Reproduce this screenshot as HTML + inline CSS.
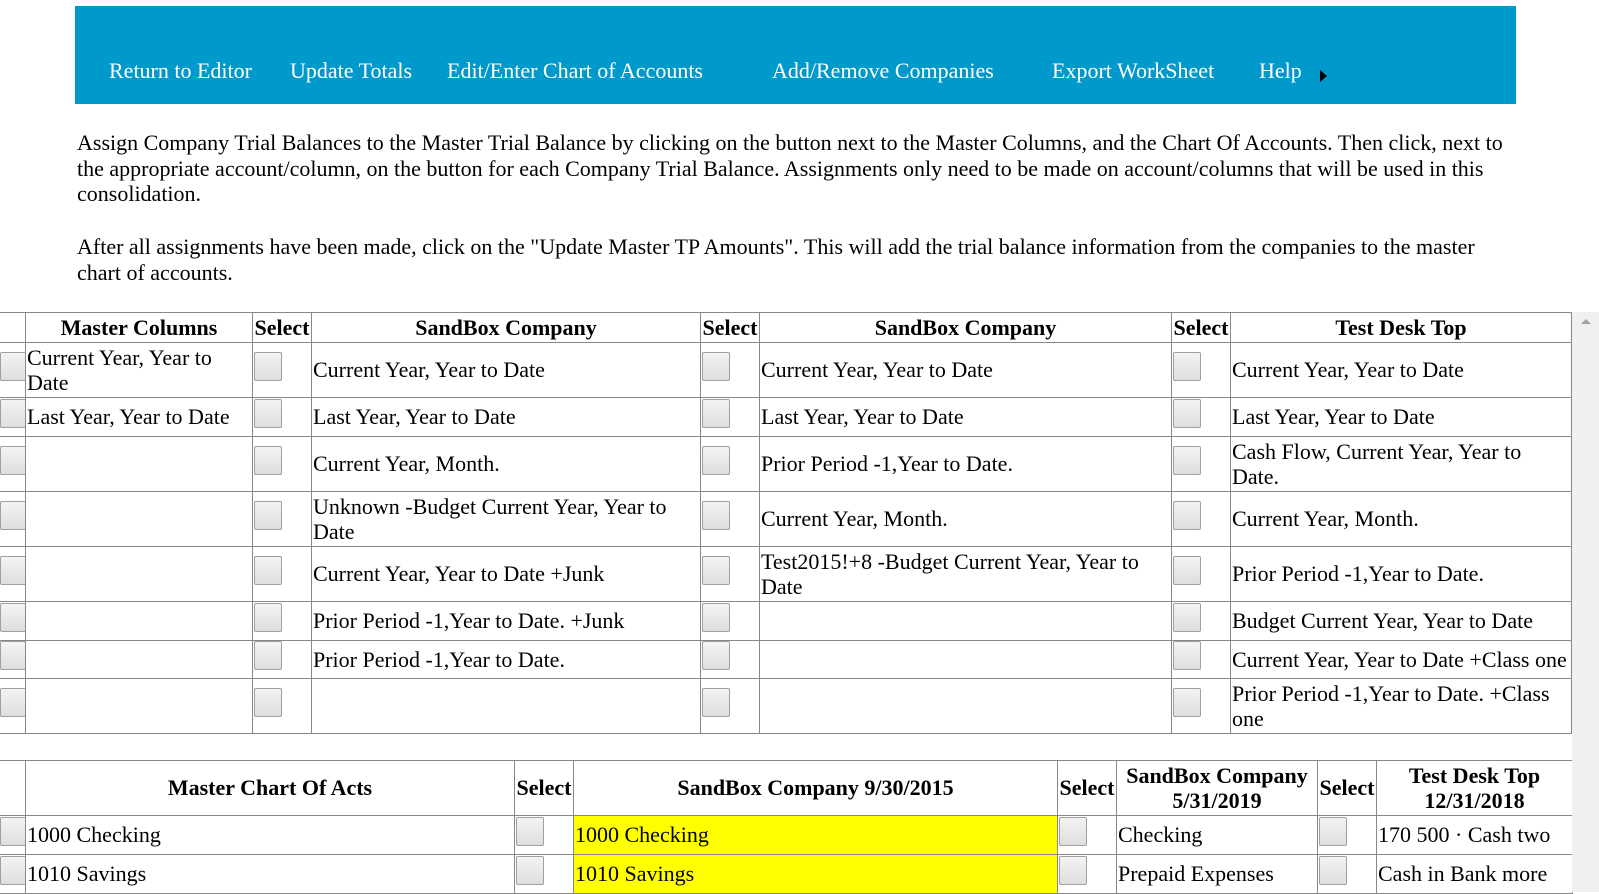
<!DOCTYPE html>
<html><head><meta charset="utf-8"><style>
html,body{margin:0;padding:0;width:1599px;height:892px;overflow:hidden;background:#fff;font-family:"Liberation Serif",serif;color:#000}
.nav{position:absolute;left:75px;top:6px;width:1441px;height:98px;background:#0099cc}
.nav span{position:absolute;top:52px;color:#fff;font-size:22px;white-space:nowrap}
.arr{position:absolute;top:64px;width:0;height:0;border-top:6px solid transparent;border-bottom:6px solid transparent;border-left:7px solid #000}
.p{position:absolute;left:77px;width:1440px;font-size:22px;line-height:25.5px}
table{position:absolute;border-collapse:collapse;table-layout:fixed;font-size:22px;line-height:25.5px}
td,th{border:1px solid #888;padding:0 0 0 1px;overflow:hidden;vertical-align:middle;text-align:left}
th{text-align:center;font-weight:bold;padding:0}
.b{display:inline-block;position:relative;top:-4px;width:26px;height:27px;border:1px solid #a0a0a0;border-radius:2px;background:linear-gradient(#f4f4f4,#dedede);vertical-align:middle}
td.s{padding:0 0 0 1px}
.y{background:#ffff00}
.sb{position:absolute;left:1572px;top:312px;width:27px;height:580px;background:#f0f0f0}
.sb:after{content:"";position:absolute;left:9px;top:7px;border-left:5px solid transparent;border-right:5px solid transparent;border-bottom:5px solid #a3a3a3}
</style></head><body>
<div class="nav">
<span style="left:34px">Return to Editor</span>
<span style="left:215px">Update Totals</span>
<span style="left:372px">Edit/Enter Chart of Accounts</span>
<span style="left:697px">Add/Remove Companies</span>
<span style="left:977px">Export WorkSheet</span>
<span style="left:1184px">Help</span>
<div class="arr" style="left:1245px"></div>
</div>
<div class="p" style="top:130px">Assign Company Trial Balances to the Master Trial Balance by clicking on the button next to the Master Columns, and the Chart Of Accounts. Then click, next to the appropriate account/column, on the button for each Company Trial Balance. Assignments only need to be made on account/columns that will be used in this consolidation.</div>
<div class="p" style="top:234px">After all assignments have been made, click on the "Update Master TP Amounts". This will add the trial balance information from the companies to the master chart of accounts.</div>

<table style="left:-2px;top:312px;width:1574px">
<colgroup><col style="width:27px"><col style="width:227px"><col style="width:59px"><col style="width:389px"><col style="width:59px"><col style="width:412px"><col style="width:59px"><col style="width:341px"></colgroup>
<tr style="height:30px"><th></th><th>Master Columns</th><th>Select</th><th>SandBox Company</th><th>Select</th><th>SandBox Company</th><th>Select</th><th>Test Desk Top</th></tr>
<tr style="height:55px"><td class="s"><span class="b"></span></td><td>Current Year, Year to Date</td><td class="s"><span class="b"></span></td><td>Current Year, Year to Date</td><td class="s"><span class="b"></span></td><td>Current Year, Year to Date</td><td class="s"><span class="b"></span></td><td>Current Year, Year to Date</td></tr>
<tr style="height:39px"><td class="s"><span class="b"></span></td><td>Last Year, Year to Date</td><td class="s"><span class="b"></span></td><td>Last Year, Year to Date</td><td class="s"><span class="b"></span></td><td>Last Year, Year to Date</td><td class="s"><span class="b"></span></td><td>Last Year, Year to Date</td></tr>
<tr style="height:55px"><td class="s"><span class="b"></span></td><td></td><td class="s"><span class="b"></span></td><td>Current Year, Month.</td><td class="s"><span class="b"></span></td><td>Prior Period -1,Year to Date.</td><td class="s"><span class="b"></span></td><td>Cash Flow, Current Year, Year to Date.</td></tr>
<tr style="height:55px"><td class="s"><span class="b"></span></td><td></td><td class="s"><span class="b"></span></td><td>Unknown -Budget Current Year, Year to Date</td><td class="s"><span class="b"></span></td><td>Current Year, Month.</td><td class="s"><span class="b"></span></td><td>Current Year, Month.</td></tr>
<tr style="height:55px"><td class="s"><span class="b"></span></td><td></td><td class="s"><span class="b"></span></td><td>Current Year, Year to Date +Junk</td><td class="s"><span class="b"></span></td><td>Test2015!+8 -Budget Current Year, Year to Date</td><td class="s"><span class="b"></span></td><td>Prior Period -1,Year to Date.</td></tr>
<tr style="height:39px"><td class="s"><span class="b"></span></td><td></td><td class="s"><span class="b"></span></td><td>Prior Period -1,Year to Date. +Junk</td><td class="s"><span class="b"></span></td><td></td><td class="s"><span class="b"></span></td><td>Budget Current Year, Year to Date</td></tr>
<tr style="height:38px"><td class="s"><span class="b"></span></td><td></td><td class="s"><span class="b"></span></td><td>Prior Period -1,Year to Date.</td><td class="s"><span class="b"></span></td><td></td><td class="s"><span class="b"></span></td><td style="white-space:nowrap">Current Year, Year to Date +Class one</td></tr>
<tr style="height:55px"><td class="s"><span class="b"></span></td><td></td><td class="s"><span class="b"></span></td><td></td><td class="s"><span class="b"></span></td><td></td><td class="s"><span class="b"></span></td><td>Prior Period -1,Year to Date. +Class one</td></tr>
</table>

<table style="left:-2px;top:760px;width:1574px">
<colgroup><col style="width:27px"><col style="width:489px"><col style="width:59px"><col style="width:484px"><col style="width:59px"><col style="width:201px"><col style="width:59px"><col style="width:196px"></colgroup>
<tr style="height:55px"><th></th><th>Master Chart Of Acts</th><th>Select</th><th>SandBox Company 9/30/2015</th><th>Select</th><th>SandBox Company 5/31/2019</th><th>Select</th><th>Test Desk Top 12/31/2018</th></tr>
<tr style="height:39px"><td class="s"><span class="b"></span></td><td>1000 Checking</td><td class="s"><span class="b"></span></td><td class="y">1000 Checking</td><td class="s"><span class="b"></span></td><td>Checking</td><td class="s"><span class="b"></span></td><td style="white-space:nowrap">170 500 · Cash two</td></tr>
<tr style="height:39px"><td class="s"><span class="b"></span></td><td>1010 Savings</td><td class="s"><span class="b"></span></td><td class="y">1010 Savings</td><td class="s"><span class="b"></span></td><td>Prepaid Expenses</td><td class="s"><span class="b"></span></td><td style="white-space:nowrap">Cash in Bank more</td></tr>
</table>
<div class="sb"></div>
</body></html>
